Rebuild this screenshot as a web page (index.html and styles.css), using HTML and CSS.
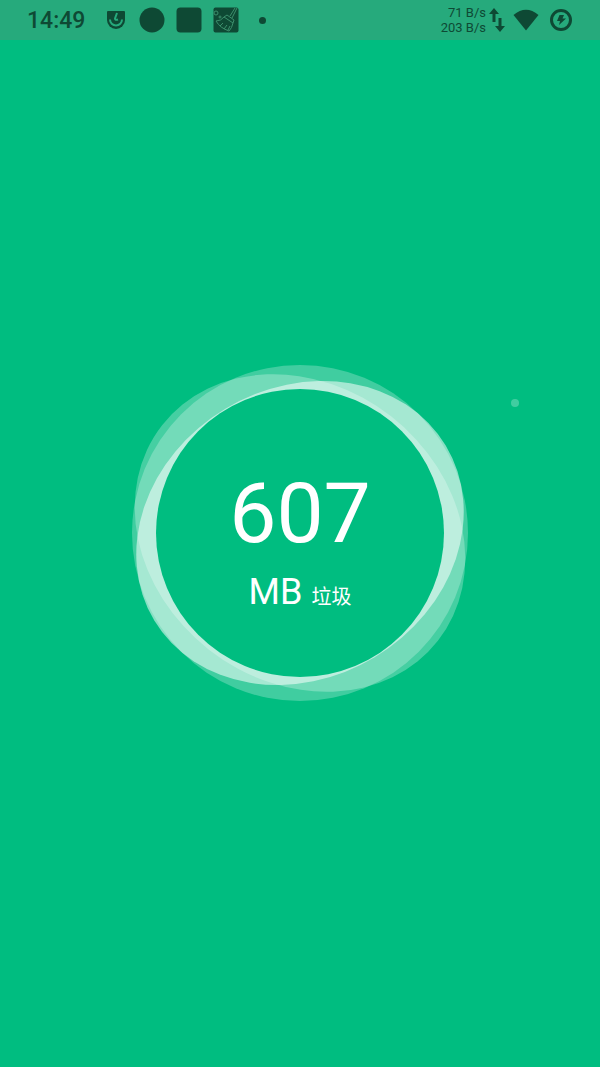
FILE: index.html
```html
<!DOCTYPE html>
<html lang="zh-CN">
<head>
    <meta charset="UTF-8">
    <meta name="viewport" content="width=device-width, initial-scale=1">
    <title>垃圾清理</title>
    <link rel="stylesheet" href="styles.css">
</head>
<body>
    <header class="status-bar">
        <div class="status-left">
            <span class="clock">14:49</span>
            <svg class="icon-app" viewBox="0 0 20 20">
                <path class="fill" d="M2 1h16q1 0 1 1v8a9 9 0 0 1-18 0V2q0-1 1-1z"/>
                <path class="cut" d="M4 9.500a6 6 0 0 0 12 0M11 3L9 8.500q0 2 3 1"/>
            </svg>
            <svg class="icon" viewBox="0 0 26 26"><circle class="fill" cx="13" cy="13" r="12.5"/></svg>
            <svg class="icon" viewBox="0 0 26 26"><rect class="fill" x="0.5" y="0.5" width="25" height="25" rx="4"/></svg>
            <svg class="icon" viewBox="0 0 26 26">
                <rect class="fill" x="0.5" y="0.5" width="25" height="25" rx="2"/>
                <path class="thin" d="M24 1l-5 10M22 1l-5 8M14 8l7 5-1 3-9-6zM11 10q-3 4-8 4 4 7 13 10 3-3 4-8M7 19l3-3M11 22l3-4M15 23l2-4"/>
                <circle class="thin" cx="3" cy="6" r="2"/>
                <circle class="thin" cx="7" cy="10" r="1"/>
            </svg>
            <span class="more-dot"></span>
        </div>
        <div class="status-right">
            <div class="speed">
                <span>71 B/s</span>
                <span>203 B/s</span>
            </div>
            <svg class="icon-arrows" viewBox="0 0 16 24">
                <path class="fill" d="M5 0l5 6H6.500v8h-3V6H0zM11 24l-5-6h3.500v-8h3v8H16z"/>
            </svg>
            <svg class="icon-wifi" viewBox="0 0 26 22">
                <path class="fill" d="M0.500 6Q13-4.500 25.500 6L13 21.500z"/>
            </svg>
            <svg class="icon-battery" viewBox="0 0 24 24">
                <circle class="ring" cx="12" cy="12" r="9.500"/>
                <path class="fill" d="M10.500 7H15l-1.500 3.500H17L10 17l1-4H8z"/>
            </svg>
        </div>
    </header>

    <main class="cleaner">
        <div class="gauge">
            <svg class="rings" viewBox="-170 -170 340 340">
                <mask id="hole" maskUnits="userSpaceOnUse" x="-180" y="-180" width="360" height="360">
                    <rect x="-180" y="-180" width="360" height="360" fill="#fff"/>
                    <circle r="144" fill="#000"/>
                </mask>
                <g mask="url(#hole)" fill="#fff">
                    <circle r="168" opacity="0.25"/>
                    <ellipse rx="175" ry="148" transform="rotate(38)" opacity="0.27"/>
                    <ellipse rx="170" ry="145" transform="rotate(-31)" opacity="0.53"/>
                </g>
                <circle class="particle" cx="215" cy="-130" r="4"/>
            </svg>
            <div class="result">
                <div class="amount">607</div>
                <div class="unit">MB <span class="junk">垃圾</span></div>
            </div>
        </div>
    </main>
</body>
</html>
```
FILE: styles.css
```css
body {
    margin: 0;
    min-height: 100vh;
    display: flex;
    flex-direction: column;
    background-color: #00bd80;
    color: #fff;
    font-family: Roboto, "Noto Sans CJK SC", sans-serif;
}

.status-bar {
    height: 40px;
    padding: 0 27px;
    display: flex;
    justify-content: space-between;
    align-items: center;
    background-color: #26aa7c;
    color: #0e4934;
}

.status-left,
.status-right {
    display: flex;
    align-items: center;
}

.status-left {
    gap: 11px;
}

.clock {
    margin-right: 9px;
    font-size: 23px;
    font-weight: 500;
    line-height: 40px;
    padding-top: 2px;
}

.icon-app {
    width: 20px;
    height: 20px;
    margin-right: 2px;
    margin-left: 1px;
}

.icon {
    width: 26px;
    height: 26px;
}

.fill {
    fill: currentColor;
}

.cut {
    fill: none;
    stroke: #26aa7c;
    stroke-width: 2;
}

.thin {
    fill: none;
    stroke: #3c8f6c;
    stroke-width: 1;
}

.ring {
    fill: none;
    stroke: currentColor;
    stroke-width: 3;
}

.more-dot {
    width: 7px;
    height: 7px;
    margin-left: 9px;
    border-radius: 50%;
    background-color: currentColor;
}

.speed {
    display: flex;
    flex-direction: column;
    text-align: right;
    font-size: 13px;
    line-height: 15px;
}

.icon-arrows {
    width: 16px;
    height: 24px;
    margin: 0 8px 0 3px;
}

.icon-wifi {
    width: 26px;
    height: 22px;
    margin-right: 10px;
}

.icon-battery {
    width: 24px;
    height: 24px;
}

.cleaner {
    flex: 1;
    display: flex;
    justify-content: center;
    align-items: center;
    padding-bottom: 41px;
}

.gauge {
    display: grid;
    place-items: center;
    width: 340px;
}

.rings,
.result {
    grid-area: 1 / 1;
}

.rings {
    width: 100%;
    overflow: visible;
}

.particle {
    fill: #fff;
    opacity: 0.25;
}

.result {
    padding-top: 26px;
    text-align: center;
}

.amount {
    font-size: 84px;
    line-height: 96px;
}

.unit {
    font-size: 36px;
    line-height: 60px;
}

.junk {
    font-size: 20px;
}
```
